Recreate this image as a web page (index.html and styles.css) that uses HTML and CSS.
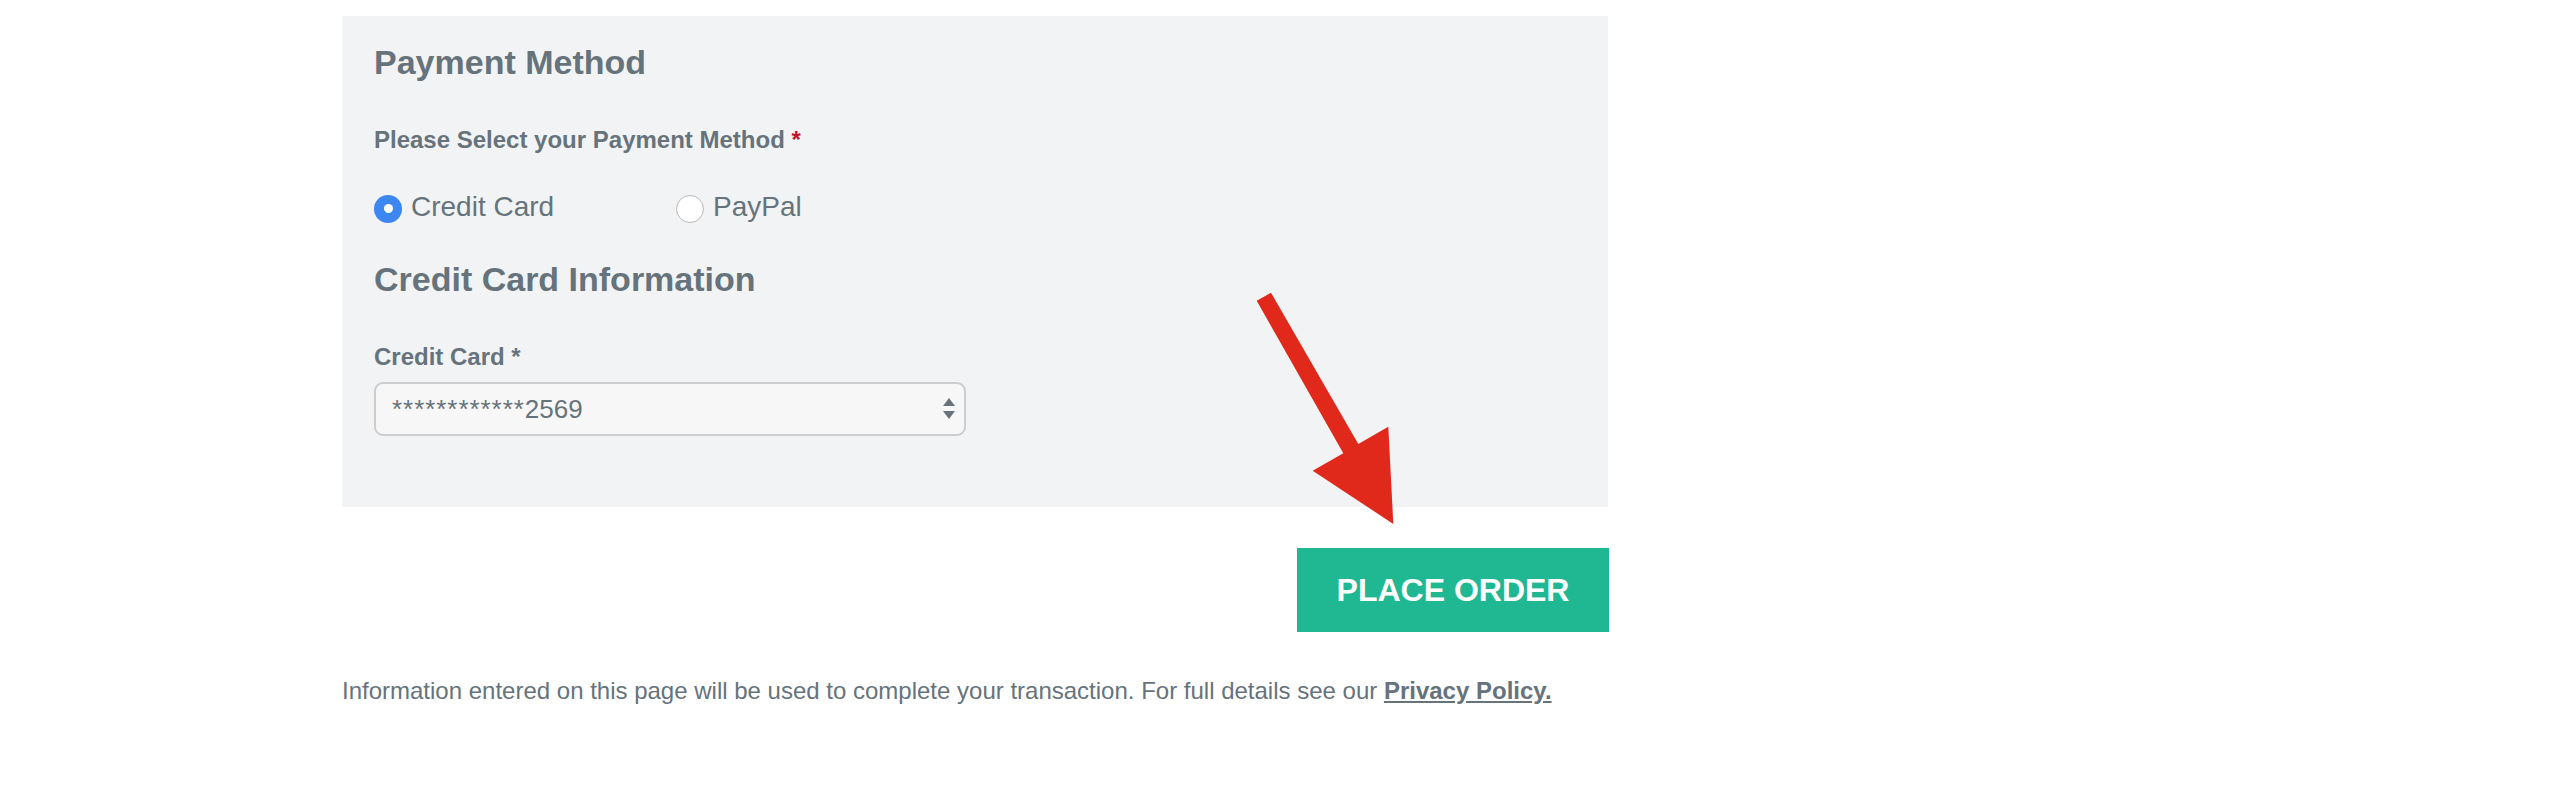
FILE: index.html
```html
<!DOCTYPE html>
<html lang="en">
<head>
<meta charset="utf-8">
<title>Checkout - Payment</title>
<link rel="stylesheet" href="styles.css">
</head>
<body>
<div class="page">
  <section class="panel">
    <h2 class="heading">Payment Method</h2>
    <div class="label label-first">Please Select your Payment Method <span class="req">*</span></div>
    <div class="radio-row">
      <label class="option option-wide">
        <span class="radio radio-on"></span>
        <span class="option-text">Credit Card</span>
      </label>
      <label class="option">
        <span class="radio"></span>
        <span class="option-text">PayPal</span>
      </label>
    </div>
    <h2 class="heading heading-second">Credit Card Information</h2>
    <div class="label label-card">Credit Card *</div>
    <div class="select">
      <span class="select-value"><span class="stars">************</span>2569</span>
      <svg class="select-arrows" width="12" height="22" viewBox="0 0 12 22">
        <polygon points="6,0 12,8 0,8" fill="#66737c"/>
        <polygon points="0,13 12,13 6,21" fill="#66737c"/>
      </svg>
    </div>
  </section>
  <div class="actions">
    <button class="place-order">PLACE ORDER</button>
  </div>
  <p class="notice">Information entered on this page will be used to complete your transaction. For full details see our <a class="policy" href="#">Privacy Policy.</a></p>
  <svg class="callout-arrow" width="170" height="250" viewBox="0 0 170 250">
    <polygon points="16.7,15.7 31,7.7 118.3,159 148.3,141.7 153.3,239 72.7,185.7 103.3,168.3" fill="#e0291b"/>
  </svg>
</div>
</body>
</html>
```

FILE: styles.css
```css
html, body {
  margin: 0;
  padding: 0;
  background: #ffffff;
}

body {
  font-family: "Liberation Sans", Arial, Helvetica, sans-serif;
  color: #66737c;
}

.page {
  position: relative;
  margin-left: 342px;
  width: 1267px;
  padding-top: 16px;
}

.panel {
  background: #f2f3f5;
  padding: 26px 32px 70px 32px;
  box-sizing: border-box;
  width: 1266px;
  height: 491px;
}

.heading {
  margin: 0;
  font-size: 34px;
  line-height: 40px;
  font-weight: bold;
  color: #66737c;
}

.heading-second {
  margin-top: 36px;
}

.label {
  font-size: 24px;
  line-height: 28px;
  font-weight: bold;
  color: #66737c;
}

.label-first {
  margin-top: 44px;
}

.req {
  color: #c8102e;
}

.radio-row {
  display: flex;
  margin-top: 37px;
  height: 32px;
}

.option {
  display: flex;
  align-items: center;
  gap: 9px;
}

.option-wide {
  width: 302px;
}

.option-text {
  font-size: 28px;
  line-height: 32px;
  color: #66737c;
}

.radio {
  box-sizing: border-box;
  width: 28px;
  height: 28px;
  border-radius: 50%;
  border: 1.5px solid #b9b9b9;
  background: #ffffff;
  margin-top: 3px;
  display: flex;
  align-items: center;
  justify-content: center;
}

.radio-on {
  border: none;
  background: #3d87f2;
}

.radio-on::after {
  content: "";
  width: 9px;
  height: 9px;
  border-radius: 50%;
  background: #ffffff;
}

.label-card {
  margin-top: 44px;
}

.select {
  box-sizing: border-box;
  margin-top: 11px;
  width: 592px;
  height: 54px;
  border: 2px solid #cdcdcd;
  border-radius: 9px;
  background: #f7f7f7;
  display: flex;
  align-items: center;
  padding: 0 9px 0 16px;
}

.select-value {
  font-size: 26px;
  line-height: 30px;
  color: #66737c;
}

.stars {
  font-size: 26px;
  letter-spacing: 0.95px;
}

.select-arrows {
  margin-left: auto;
}

.actions {
  display: flex;
  justify-content: flex-end;
  margin-top: 41px;
}

.place-order {
  width: 312px;
  height: 84px;
  border: none;
  border-radius: 0;
  background: #1fb892;
  color: #ffffff;
  font-family: "Liberation Sans", Arial, Helvetica, sans-serif;
  font-size: 32px;
  font-weight: bold;
  padding: 0;
  cursor: pointer;
}

.notice {
  margin: 45px 0 0 0;
  font-size: 24px;
  line-height: 28px;
  color: #66737c;
  white-space: nowrap;
}

.policy {
  color: #66737c;
  font-weight: bold;
  text-decoration: underline;
}

.callout-arrow {
  position: absolute;
  left: 898px;
  top: 285px;
}
```
